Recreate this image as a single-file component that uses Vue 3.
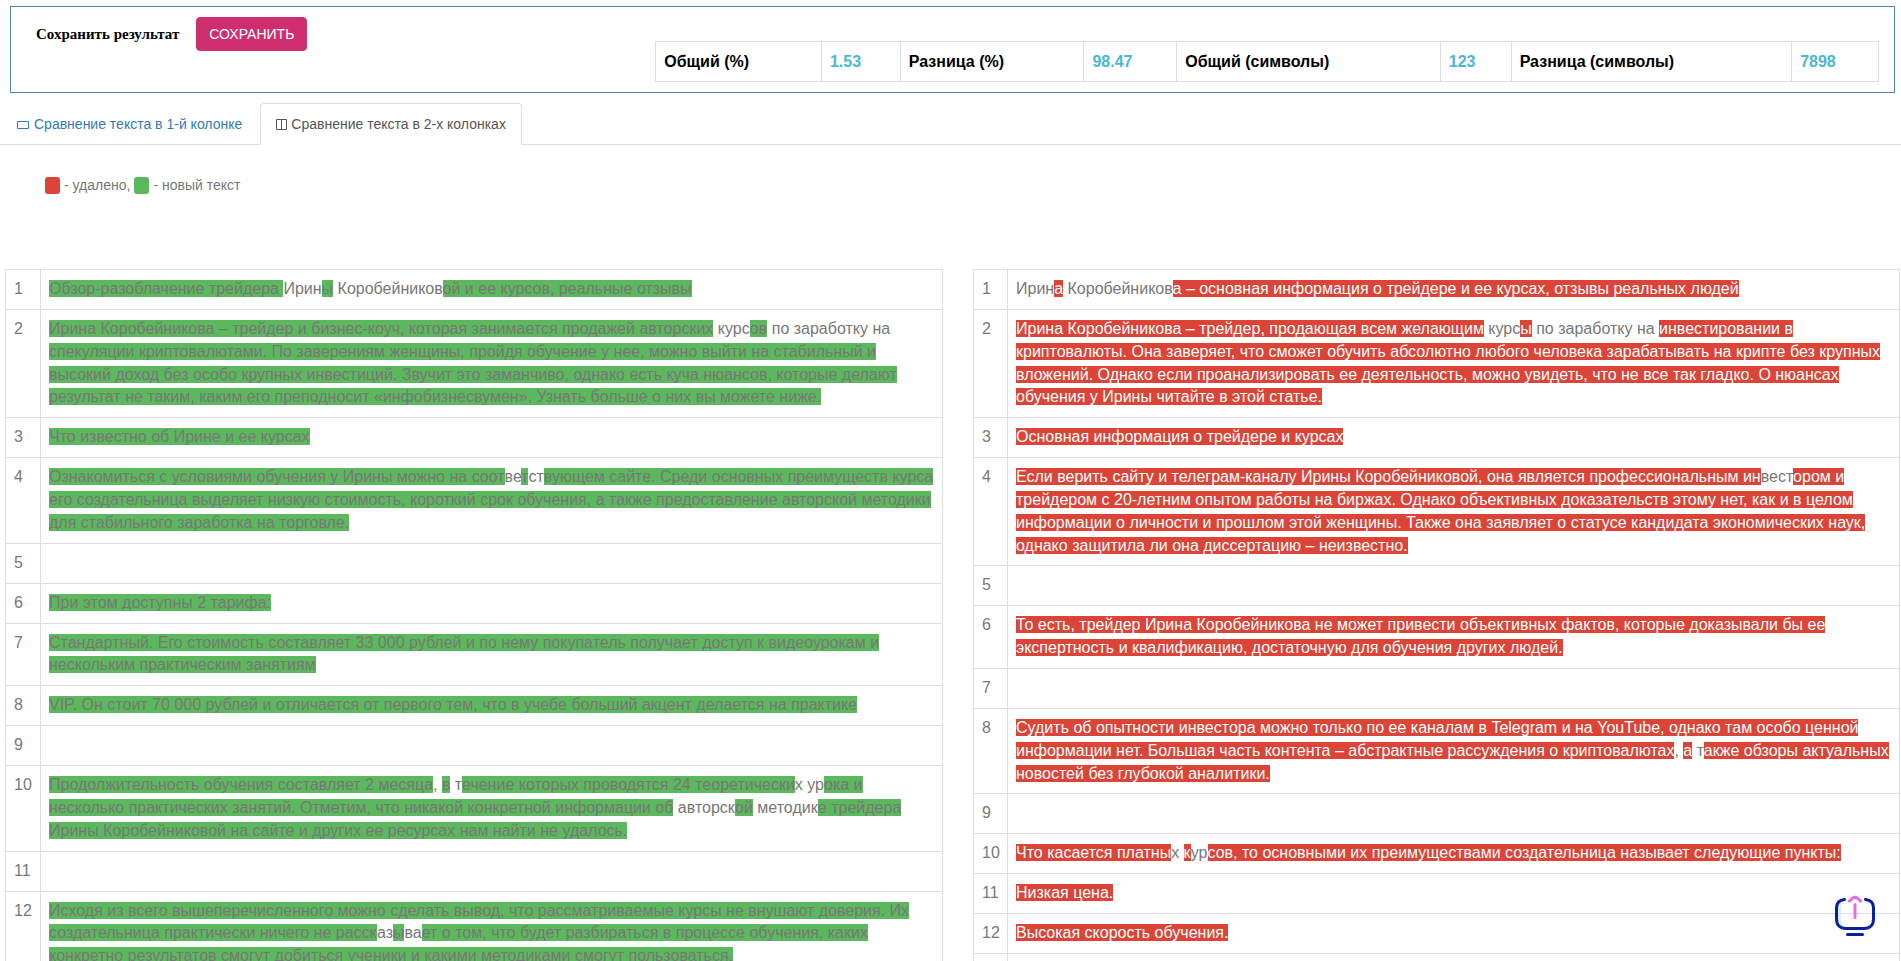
<script setup>
const stats = [
  { label: 'Общий (%)', value: '1.53', labelWidth: 166, valueWidth: 79 },
  { label: 'Разница (%)', value: '98.47', labelWidth: 184, valueWidth: 93 },
  { label: 'Общий (символы)', value: '123', labelWidth: 264, valueWidth: 71 },
  { label: 'Разница (символы)', value: '7898', labelWidth: 281, valueWidth: 87 },
]
const totalWidth = stats.reduce((sum, s) => sum + s.labelWidth + s.valueWidth, 0)
const share = (w) => ({ width: (w / totalWidth) * 100 + '%' })

// Fragments wrapped in square brackets are highlighted.
const parse = (line) =>
  line
    .split(/(\[[^\]]*\])/)
    .filter(Boolean)
    .map((part) =>
      part.startsWith('[') ? { text: part.slice(1, -1), mark: true } : { text: part, mark: false },
    )

const added = [
  '[Обзор-разоблачение трейдера ]Ирин[ы] Коробейников[ой и ее курсов, реальные отзывы]',
  '[Ирина Коробейникова – трейдер и бизнес-коуч, которая занимается продажей авторских] курс[ов] по заработку на [спекуляции криптовалютами. По заверениям женщины, пройдя обучение у нее, можно выйти на стабильный и высокий доход без особо крупных инвестиций. Звучит это заманчиво, однако есть куча нюансов, которые делают результат не таким, каким его преподносит «инфобизнесвумен». Узнать больше о них вы можете ниже.]',
  '[Что известно об Ирине и ее курсах]',
  '[Ознакомиться с условиями обучения у Ирины можно на соот]ве[т]ст[вующем сайте. Среди основных преимуществ курса его создательница выделяет низкую стоимость, короткий срок обучения, а также предоставление авторской методики для стабильного заработка на торговле.]',
  '',
  '[При этом доступны 2 тарифа:]',
  '[Стандартный. Его стоимость составляет 33 000 рублей и по нему покупатель получает доступ к видеоурокам и нескольким практическим занятиям]',
  '[VIP. Он стоит 70 000 рублей и отличается от первого тем, что в учебе больший акцент делается на практике]',
  '',
  '[Продолжительность обучения составляет 2 месяца], [в] т[ечение которых проводятся 24 теоретически]х ур[ока и несколько практических занятий. Отметим, что никакой конкретной информации об] авторск[ой] методик[е трейдера Ирины Коробейниковой на сайте и других ее ресурсах нам найти не удалось.]',
  '',
  '[Исходя из всего вышеперечисленного можно сделать вывод, что рассматриваемые курсы не внушают доверия. Их создательница практически ничего не расск]аз[ы]ва[ет о том, что будет разбираться в процессе обучения, каких конкретно результатов смогут добиться ученики и какими методиками смогут пользоваться.]',
].map(parse)

const removed = [
  'Ирин[а] Коробейников[а – основная информация о трейдере и ее курсах, отзывы реальных людей]',
  '[Ирина Коробейникова – трейдер, продающая всем желающим] курс[ы] по заработку на [инвестировании в криптовалюты. Она заверяет, что сможет обучить абсолютно любого человека зарабатывать на крипте без крупных вложений. Однако если проанализировать ее деятельность, можно увидеть, что не все так гладко. О нюансах обучения у Ирины читайте в этой статье.]',
  '[Основная информация о трейдере и курсах]',
  '[Если верить сайту и телеграм-каналу Ирины Коробейниковой, она является профессиональным ин]вест[ором и трейдером с 20-летним опытом работы на биржах. Однако объективных доказательств этому нет, как и в целом информации о личности и прошлом этой женщины. Также она заявляет о статусе кандидата экономических наук, однако защитила ли она диссертацию – неизвестно.]',
  '',
  '[То есть, трейдер Ирина Коробейникова не может привести объективных фактов, которые доказывали бы ее экспертность и квалификацию, достаточную для обучения других людей.]',
  '',
  '[Судить об опытности инвестора можно только по ее каналам в Telegram и на YouTube, однако там особо ценной информации нет. Большая часть контента – абстрактные рассуждения о криптовалютах], [а] т[акже обзоры актуальных новостей без глубокой аналитики.]',
  '',
  '[Что касается платны]х [к]ур[сов, то основными их преимуществами создательница называет следующие пункты:]',
  '[Низкая цена.]',
  '[Высокая скорость обучения.]',
  '',
].map(parse)

const sides = [
  { key: 'added', rows: added },
  { key: 'removed', rows: removed },
]
</script>

<template>
  <div class="page">
    <header class="panel">
      <div class="save">
        <span id="save-label" class="save-label">Сохранить результат</span>
        <button type="button" class="save-btn" aria-describedby="save-label">СОХРАНИТЬ</button>
      </div>
      <table class="stats">
        <colgroup>
          <template v-for="s in stats" :key="s.label">
            <col :style="share(s.labelWidth)" />
            <col :style="share(s.valueWidth)" />
          </template>
        </colgroup>
        <tbody>
          <tr>
            <template v-for="s in stats" :key="s.label">
              <th scope="row">{{ s.label }}</th>
              <td>{{ s.value }}</td>
            </template>
          </tr>
        </tbody>
      </table>
    </header>

    <nav class="tabs">
      <a href="#one" class="tab">
        <svg class="tab-icon" width="14" height="14" viewBox="0 0 14 14" fill="none" stroke="currentColor">
          <path d="M1.500 4.500h11v7h-11z" />
        </svg>
        Сравнение текста в 1-й колонке
      </a>
      <a href="#two" class="tab active" aria-current="page">
        <svg class="tab-icon" width="11" height="14" viewBox="0 0 11 14" fill="none" stroke="currentColor">
          <path d="M.5 2.500h10v10H.5zM5.500 2.500v10" />
        </svg>
        Сравнение текста в 2-х колонках
      </a>
    </nav>

    <p class="legend">
      <span class="swatch removed"></span> - удалено, <span class="swatch added"></span> - новый текст
    </p>

    <main class="compare">
      <table v-for="side in sides" :key="side.key" class="diff" :class="side.key">
        <tbody>
          <tr v-for="(row, i) in side.rows" :key="i">
            <td class="num">{{ i + 1 }}</td>
            <td><template v-for="(p, j) in row" :key="j"><span v-if="p.mark" class="mark">{{ p.text }}</span><template v-else>{{ p.text }}</template></template></td>
          </tr>
        </tbody>
      </table>
    </main>

    <button type="button" class="to-top" aria-label="Наверх">
      <svg width="42" height="42" viewBox="0 0 42 42" fill="none" stroke-linecap="round" stroke-linejoin="round">
        <path d="M5 7v20l4 6" stroke="#dcecff" stroke-width="4" />
        <path
          d="M10.500 4.500C5.500 5 2.500 8 2.500 13v11c0 6 3.500 9.500 9.500 9.500h18c6 0 9.500-3.500 9.500-9.500V13c0-5-3-8-8-8.500"
          stroke="#0a2299"
          stroke-width="3"
        />
        <path d="M13.500 39.500h15" stroke="#0a2299" stroke-width="3" />
        <path d="M21 9.500v13M15.500 6l3-2.600q2.500-2 5 0l3 2.600" stroke="#e66be6" stroke-width="3" />
      </svg>
    </button>
  </div>
</template>

<style>
body {
  margin: 0;
  background: #fff;
}
</style>

<style scoped>
.page {
  height: 100vh;
  overflow: hidden;
  box-sizing: border-box;
  font: 14px/20px "Liberation Sans", Arial, sans-serif;
  color: #777;
}

.panel {
  display: flex;
  justify-content: space-between;
  margin: 6px 6px 0 10px;
  padding: 10px 15px 10px 25px;
  border: 1px solid #5484ab;
}

.save {
  display: flex;
  align-items: center;
  align-self: flex-start;
  gap: 17px;
}

.save-label {
  font: bold 15px/20px "Liberation Serif", "Times New Roman", serif;
  color: #000;
}

.save-btn {
  height: 34px;
  padding: 0 12px;
  border: 1px solid #c9356b;
  border-radius: 4px;
  background: #cf2e6e;
  color: #fff;
  font: 14px/20px "Liberation Sans", Arial, sans-serif;
}

.stats {
  width: 66.4%;
  margin-top: 24px;
  border-collapse: collapse;
  table-layout: fixed;
  font-size: 16px;
  line-height: 23px;
}

.stats th,
.stats td {
  padding: 8px;
  border: 1px solid #ddd;
  text-align: left;
  font-weight: bold;
  color: #000;
}

.stats td {
  color: #4db6d0;
}

.tabs {
  display: flex;
  align-items: flex-end;
  gap: 2px;
  margin-top: 10px;
  border-bottom: 1px solid #ddd;
}

.tab {
  display: flex;
  align-items: center;
  gap: 4px;
  margin-bottom: -1px;
  padding: 10px 15px;
  border: 1px solid transparent;
  border-radius: 4px 4px 0 0;
  color: #337ab7;
  text-decoration: none;
}

.tab.active {
  border-color: #ddd;
  border-bottom-color: #fff;
  background: #fff;
  color: #555;
}

.legend {
  display: flex;
  align-items: center;
  gap: 4px;
  margin: 30px 0 0 45px;
}

.swatch {
  width: 15px;
  height: 17px;
  border-radius: 3px;
}

.swatch.removed,
.removed .mark {
  background: #db4437;
}

.swatch.added,
.added .mark {
  background: #5cb85c;
}

.removed .mark {
  color: #fff;
}

.compare {
  display: grid;
  grid-template-columns: 938fr 927fr;
  align-items: start;
  gap: 30px;
  margin: 74px 1px 0 5px;
}

.diff {
  width: 100%;
  border-collapse: collapse;
  table-layout: fixed;
  font-size: 16px;
  line-height: 1.425;
}

.diff td {
  height: 23px;
  padding: 8px;
  border: 1px solid #ddd;
  vertical-align: top;
}

.diff .num {
  width: 18px;
}

.diff.removed .num {
  width: 17px;
}

.to-top {
  position: fixed;
  right: 25px;
  bottom: 24px;
  padding: 0;
  border: 0;
  background: none;
  line-height: 0;
}
</style>
